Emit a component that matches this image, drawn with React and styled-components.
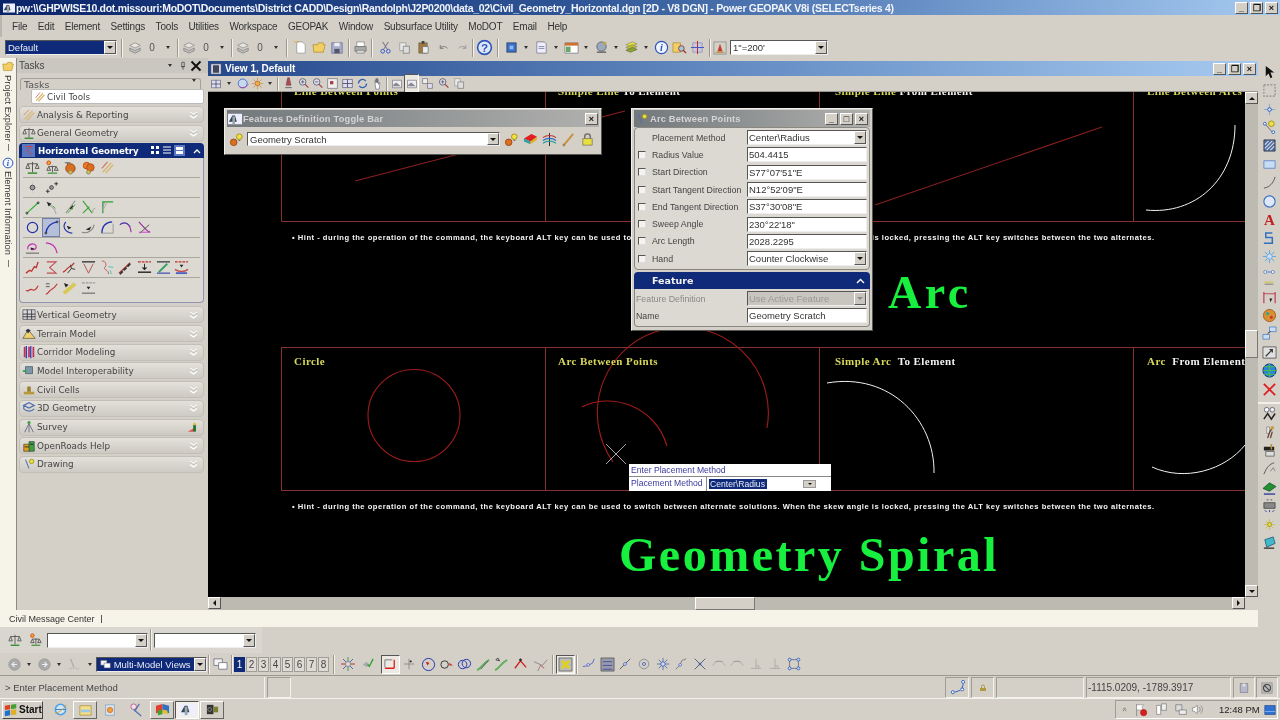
import React from 'react';
import styled, { createGlobalStyle } from 'styled-components';

const GlobalStyle = createGlobalStyle`
html, body { margin: 0; padding: 0; background: #d4d0c8; }
body { font-family: "Liberation Sans", Arial, sans-serif; font-size: 10px; color: #222; }
* { box-sizing: border-box; }
`;

const L = (d, c = '#444', w = 1) => <path d={d} stroke={c} strokeWidth={w} fill="none" />;
const F = (d, c, s = 'none') => <path d={d} fill={c} stroke={s} strokeWidth={0.7} />;
const Ci = (x, y, r, c, f = 'none', w = 1) => <circle cx={x} cy={y} r={r} stroke={c} fill={f} strokeWidth={w} />;

const ICONS = {
  stack: <>{F('M2 5l6-3 6 3-6 3z', '#e8e6e0', '#777')}{F('M2 8l6 3 6-3v3l-6 3-6-3z', '#bbb', '#777')}</>,
  newdoc: <>{F('M4 2h6l3 3v9H4z', '#fff', '#888')}{L('M3 3l-2-2M5 1v2', '#e0a020')}</>,
  folder: <>{F('M1 5h5l1-2h5v2h2l-2 8H2z', '#f2cf62', '#a88428')}</>,
  save: <>{F('M2 2h12v12H2z', '#a8aecd', '#55608a')}{F('M5 2h6v4H5z', '#eee')}{F('M5 9h6v5H5z', '#556')}</>,
  print: <>{F('M4 2h8v5H4z', '#fff', '#777')}{F('M2 7h12v5H2z', '#aaa', '#666')}{F('M4 11h8v3H4z', '#ddd', '#777')}</>,
  cut: <>{L('M5 2l5 8M11 2l-5 8', '#667')}{Ci(5, 12, 2, '#3355cc')}{Ci(11, 12, 2, '#3355cc')}</>,
  copy: <>{F('M2 2h7v9H2z', '#e8e8e8', '#888')}{F('M6 6h7v8H6z', '#ddd', '#666')}</>,
  paste: <>{F('M3 3h9v11H3z', '#a07840', '#664')}{F('M6 1h3v3H6z', '#444')}{F('M7 7h6v7H7z', '#eee', '#666')}</>,
  undo: <>{L('M4 5v4h4M4 9c2-3 6-3 9 0', '#777', 1.2)}</>,
  redo: <>{L('M12 5v4H8M12 9c-2-3-6-3-9 0', '#999', 1.2)}</>,
  help: <>{Ci(8, 8, 6.5, '#2b55b8', '#dfe8fa', 1.5)}<text x="8" y="12" textAnchor="middle" fontSize="11" fontWeight="700" fill="#2b55b8" fontFamily="Liberation Sans">?</text></>,
  cube: <>{F('M3 3h10v10H3z', '#3a70c8', '#234')}{F('M6 6h4v4H6z', '#8fb8f0')}</>,
  page: <>{F('M3 2h8l2 2v10H3z', '#eef', '#667')}{L('M5 7h6M5 9h6', '#88a')}</>,
  table: <>{F('M1 3h14v11H1z', '#fff', '#667')}{F('M1 3h14v3H1z', '#d07030')}{F('M2 7h5v6H2z', '#68a868')}</>,
  globe: <>{Ci(8, 7, 5, '#667', '#9ab')}{L('M3 13h10', '#666', 1.5)}{F('M10 2h3v3h-3z', '#c8a040')}</>,
  layers: <>{F('M2 5l7-3 5 2-7 3z', '#e8e040', '#886')}{F('M2 8l7-3 5 2-7 3z', '#b8c030', '#886')}{F('M2 11l7-3 5 2-7 3z', '#8aa828', '#664')}</>,
  info: <>{Ci(8, 8, 6.5, '#2b55b8', '#f0f4ff', 1.3)}<text x="8" y="12" textAnchor="middle" fontSize="11" fontStyle="italic" fontWeight="700" fill="#2b55b8" fontFamily="Liberation Serif">i</text></>,
  findfile: <>{F('M1 3h8v10H1z', '#f2cf62', '#a88428')}{Ci(10, 9, 3, '#a03030', '#9cd')}{L('M12 11l3 3', '#a03030', 1.5)}</>,
  crosshair: <>{F('M3 3h10v10H3z', '#c8c8e0', '#88a')}{L('M8 1v14', '#c02020')}{L('M1 8h14', '#4050c0')}</>,
  scalebox: <>{F('M1 1h14v14H1z', '#d4d0c8', '#777')}{F('M8 3l3 9H5z', '#c04030')}{L('M3 13h10', '#b08820')}</>,
  zoomin: <>{Ci(7, 6, 4, '#556', '#dde')}{L('M10 9l4 4', '#a04040', 1.5)}{L('M5 6h4M7 4v4', '#556')}</>,
  zoomout: <>{Ci(7, 6, 4, '#556', '#dde')}{L('M10 9l4 4', '#a04040', 1.5)}{L('M5 6h4', '#556')}</>,
  fit: <>{F('M2 2h12v12H2z', '#eee', '#556')}{F('M5 5h4v4H5z', '#a04040')}</>,
  grid: <>{F('M2 3h12v10H2z', '#dde', '#446')}{L('M8 3v10M2 8h12', '#446')}</>,
  rotate: <>{L('M3 8a5 5 0 0 1 9-3M13 8a5 5 0 0 1-9 3', '#3060b0', 1.6)}</>,
  hand: <>{F('M5 8V4h1v3-5h1v5-5h1v5-4h1v6l1-2h1l-1 8H6z', '#fff', '#556')}</>,
  view: <>{F('M2 3h12v10H2z', '#eee', '#556')}{F('M3 9l4-3 6 5H3z', '#889')}</>,
  tiles: <>{F('M2 2h6v6H2z', '#eee', '#556')}{F('M8 8h6v6H8z', '#dde', '#556')}</>,
  marker: <>{F('M7 1h2l2 9H5z', '#b04a50', '#644')}{L('M4 13h8', '#777', 1.5)}</>,
  sun: <>{Ci(8, 8, 3, '#c06030', '#e8b040')}{L('M8 1v3M8 12v3M1 8h3M12 8h3M3 3l2 2M11 11l2 2M13 3l-2 2M3 13l2-2', '#d09030')}</>,
  brain: <>{Ci(7, 8, 5.5, '#3060c0', '#c8d8f0')}{L('M3 12c4 2 8 1 11-3', '#a040a0')}</>,
  scale: <>{L('M8 2v11M3 4h10M3 4l-2 5h4zM13 4l-2 5h4z', '#555')}{L('M3 14h10', '#2a8a2a', 1.5)}</>,
  scalesun: <>{L('M9 6v7M5 7h8M5 7l-2 4h4zM13 7l-2 4h4z', '#555')}{L('M4 14h10', '#2a8a2a', 1.2)}{Ci(5, 3, 2, '#d04020', '#f0b020')}</>,
  palbulb: <>{L('M3 3h6M6 3v4', '#555')}{Ci(9, 9, 5, '#a04810', '#d87020')}{Ci(9, 13, 2, '#886', '#ddc040')}</>,
  palette: <>{Ci(6, 6, 3.5, '#c04810', '#e88030')}{Ci(10, 8, 4, '#c04810', '#d87020')}{Ci(8, 13, 2, '#886', '#ddc040')}</>,
  clip: <>{L('M3 13L12 3M6 14l8-9', '#d8b878', 1.6)}{L('M2 9l6-7', '#d07060', 1.2)}</>,
  pointAim: <>{L('M8 2v12M2 8h12', '#ccc')}{Ci(8, 8, 2.5, '#444', '#999')}</>,
  points: <>{Ci(8, 8, 2, '#444', '#999')}{L('M13 2v4M11 4h4M2 12h4M4 10v4', '#333')}</>,
  lineG: <>{L('M2 14L14 3', '#30b030', 1.3)}{Ci(2, 14, 1, '#333')}{Ci(14, 3, 1, '#333')}</>,
  lineArrow: <>{L('M3 2l8 8 2 5', '#aaa', 1.2)}{F('M3 2l5 2-3 3z', '#222')}{L('M9 6l3 3', '#30a030')}</>,
  lineSlash: <>{L('M4 14L14 1', '#999', 1.2)}{F('M8 9l4-4-1 5z', '#222')}{L('M6 14L14 5', '#30b030')}</>,
  lineCross: <>{L('M2 1l10 13M2 14l7-7', '#30a030', 1.1)}{L('M15 9c-2 0-3 2-2 4', '#999')}</>,
  lineCorner: <>{L('M3 14V2h11', '#30a030', 1.3)}{L('M5 2l-2 6', '#999')}{L('M8 2l-5 9', '#aaa')}</>,
  circle: <>{Ci(8, 8, 5.5, '#2030b0', 'none', 1.3)}</>,
  arcB: <>{L('M2 14C3 7 8 3 14 2', '#2030b0', 1.4)}{Ci(2, 14, 1, '#333')}{Ci(14, 2, 1, '#333')}</>,
  arcT: <>{L('M4 2C0 7 3 13 11 14', '#2030b0', 1.2)}{F('M5 6l5 2-3 2z', '#222')}</>,
  arcR: <>{L('M1 13c6 2 12-2 13-8', '#888', 1.1)}{F('M5 10l6-3-2 4z', '#222')}</>,
  arcQ: <>{L('M2 14C2 6 7 2 13 2', '#2030b0', 1.5)}{L('M2 14h12V4', '#999')}</>,
  arcP: <>{L('M2 5c4-4 11-2 12 8', '#a030a0', 1.2)}{L('M2 5c5-3 9-2 11 2', '#3040b0')}</>,
  arcX: <>{L('M2 2c4 4 8 10 12 11', '#a030a0', 1.3)}{L('M3 14L13 5', '#555')}{L('M2 13h12', '#c040c0')}</>,
  spiralIn: <>{L('M3 10C2 4 11 2 12 7c0 4-5 4-6 2', '#c030b0', 1.2)}{L('M1 14h14', '#555')}{F('M6 8l4 1-3 2z', '#222')}</>,
  arcM: <>{L('M2 3c6 0 11 4 12 11', '#c030b0', 1.3)}</>,
  zig1: <>{L('M1 14l4-3 2 1 3-5 2 1 2-6', '#c03030', 1.4)}</>,
  zig2: <>{L('M3 2h10L6 8l7 6H3', '#c05050', 1.1)}</>,
  zig3: <>{L('M1 13c3-1 4-4 6-5s4-2 6-5', '#c03030', 1.3)}{L('M6 14l4-5 4 1M10 9l-1-4', '#333')}</>,
  tri: <>{L('M1 2h14', '#222', 1.3)}{L('M3 4l5 10 5-10', '#b05050')}</>,
  zig4: <>{L('M2 1c5 0 5 5 3 7s5 3 4 7', '#c05050')}{L('M9 7l5 1M11 11l1 4', '#40c0c0')}</>,
  dashes: <>{L('M1 14L13 3', '#c03030', 1.3)}{L('M2 15l3-3M6 11l3-3M10 7l3-3', '#333', 2)}</>,
  drop: <><path d="M1 2h14" stroke="#c03030" strokeWidth="1.3" strokeDasharray="3 1" />{L('M8 4v6', '#222')}{F('M5 8h6l-3 3z', '#222')}{L('M1 13h14', '#222', 1.5)}</>,
  dropG: <>{L('M1 2h14', '#223', 1.2)}{L('M1 14h14', '#3040b0', 1.2)}{L('M3 13L12 4', '#30a060', 2)}</>,
  dropR: <><path d="M1 2h14" stroke="#c03030" strokeWidth="1.2" strokeDasharray="3 1" />{F('M6 5h4l-2 3z', '#222')}{L('M1 10c4 3 10 3 14 0', '#c05050', 1.4)}{L('M2 14h12', '#5060c0', 2)}</>,
  wave: <>{L('M1 10c3 2 4-2 6-1s4 2 7-4', '#c03030', 1.2)}</>,
  waveEq: <>{L('M2 14c3 0 3-4 6-5s4-3 6-6', '#c03030', 1.2)}{L('M2 3h4M2 6h4', '#555')}</>,
  ruler: <>{L('M2 13L14 3', '#d8c858', 4)}{F('M2 2l5 2-3 3z', '#222')}</>,
  dashDrop: <><path d="M1 2h14" stroke="#999" strokeWidth="1.2" strokeDasharray="3 1" />{F('M6 6h4l-2 3z', '#222')}{L('M1 13h14', '#777', 1.4)}</>,
  back: <>{Ci(8, 8, 7, '#999', '#aaa')}{L('M11 8H5M8 5L5 8l3 3', '#eee', 1.5)}</>,
  forward: <>{Ci(8, 8, 7, '#999', '#aaa')}{L('M5 8h6M8 5l3 3-3 3', '#eee', 1.5)}</>,
  pen: <>{L('M4 2l4 10', '#aaa', 1.4)}{L('M2 14c4-2 8-2 12 0', '#bbb', 1.2)}</>,
  monitors: <>{F('M1 2h9v7H1z', '#f4f4f4', '#556')}{F('M6 6h9v7H6z', '#fff', '#556')}</>,
  snapStar: <>{L('M8 1v14', '#40a050')}{L('M1 8h14', '#c03030')}{L('M3 3l10 10M13 3L3 13', '#6060c0')}{Ci(8, 8, 2.5, '#888', '#ddd')}</>,
  check: <>{F('M3 8l4 3 3-3-3-3z', '#aaa')}{L('M8 8l2 2 4-8', '#30a030', 1.4)}</>,
  snapAxes: <>{L('M2 12h10', '#e02020', 1.6)}{L('M12 12V3', '#e02020', 1.4)}{L('M2 3h8M2 3v8', '#777')}</>,
  plus: <>{L('M8 2v12M2 8h12', '#888')}{Ci(10, 5, 0.7, '#222', '#222')}</>,
  circPt: <>{Ci(8, 8, 6.5, '#2030b0')}{F('M5 5l4 1-2 3z', '#c02020')}</>,
  circMid: <>{Ci(6, 8, 4, '#333')}{F('M11 6l4 3h-4z', '#d03030')}</>,
  circs: <>{Ci(6, 8, 4.5, '#2030b0')}{Ci(10, 7, 4.5, '#2030b0')}</>,
  snakeG: <>{L('M1 14c4-1 6-7 13-11', '#60b060', 2)}{L('M5 13l8-9', '#555')}</>,
  triG: <>{L('M1 14c4-1 6-7 13-11', '#60b060', 2)}{L('M2 3l2-2 2 3z', '#444')}</>,
  chev: <>{L('M2 12l6-8 6 7', '#d02020', 1.4)}{Ci(8, 3, 1, '#222', '#222')}</>,
  quad: <>{L('M1 5l9 4 5-6M8 9l-3 6', '#888')}{L('M8 9l4 3', '#c05050')}</>,
  snapX: <>{F('M1 1h14v14H1z', '#bbb', '#444')}{L('M4 4l8 8M12 4l-8 8', '#e0d020', 3)}</>,
  smallLine: <>{L('M1 11l5-1 6-3 2-5', '#5060c0')}{Ci(7, 9, 1.5, '#5060c0', '#fff')}</>,
  hatch: <>{F('M1 1h14v14H1z', '#9a9aa8', '#444')}{L('M3 5h10M3 9h10M3 13h10', '#4050a0')}</>,
  midline: <>{L('M2 14L14 2', '#555')}{Ci(8, 8, 1.6, '#5060c0', '#fff')}</>,
  target: <>{Ci(8, 8, 5.5, '#889')}{Ci(8, 8, 1.8, '#5060c0')}</>,
  burst: <>{L('M8 1v14M1 8h14M3 3l10 10M13 3L3 13', '#5070a0')}{Ci(8, 8, 2.5, '#5060c0', '#cde')}</>,
  bend: <>{L('M2 14l5-5 2-5 5-2', '#777')}{Ci(7, 9, 1.5, '#5060c0', '#fff')}</>,
  xMark: <>{L('M2 2l12 12M14 2L2 14', '#556070', 1.1)}{Ci(8, 8, 1.2, '#5060c0')}</>,
  hump: <>{L('M1 10c3-7 11-7 14 0', '#aaa')}{L('M4 5h8', '#999')}</>,
  foot: <>{L('M8 2v11M2 13h12M11 13v-3h-3', '#aaa')}</>,
  fence: <>{F('M3 3h10v10H3z', 'none', '#445')}{[[3, 3], [13, 3], [3, 13], [13, 13]].map(([x, y]) => <circle key={x * 20 + y} cx={x} cy={y} r="1.7" fill="#cde" stroke="#3060c0" />)}</>,
  ie: <>{Ci(8, 8, 5.5, '#50a0e0', '#cfe6f8', 1.6)}{L('M3 8h10', '#3080c8')}{L('M2 12C6 12 13 6 14 3', '#e0a030')}</>,
  explorer: <>{F('M2 4h12v10H2z', '#f4e08a', '#a88428')}{F('M3 8h10v3H3z', '#9cc8e8')}</>,
  media: <>{F('M3 2h10v12H3z', '#d8e4f0', '#7090b0')}{Ci(8, 8, 3, '#e07020', '#f0a040')}</>,
  tool: <>{Ci(5, 5, 3, '#c06090', '#f0e0e8')}{L('M5 8l8 7M11 2L6 10', '#5070b0', 1.3)}</>,
  flag: <>{F('M1 4l7-2v8l-7 2z', '#e04030')}{F('M8 2l7 2v8l-7-2z', '#3070c0')}{F('M3 9l5-1v5l-5 1z', '#40a030')}{F('M8 8l5 1 1 4-6-1z', '#e0c030')}</>,
  thumb: <>{F('M0 2h16v12H0z', '#eef')}{F('M1 11l4-7 3 0 2 7z', '#345')}{F('M5 5h3v9H5z', '#9aa')}</>,
  camera: <>{F('M2 3h7v10H2z', '#333')}{F('M9 5h5v6H9z', '#7a8030')}{Ci(5, 8, 2, '#888')}</>,
  winflag: <>{F('M1 3l6-1v5l-6 1z', '#e04020')}{F('M8 2l6-1v5l-6 1z', '#40a030')}{F('M1 9l6-1v6l-6 1z', '#2070d0')}{F('M8 8l6-1v6l-6 1z', '#e0b020')}</>,
  lock: <>{L('M5 7V5a3 3 0 0 1 6 0v2', '#666', 1.4)}{F('M3 7h10v7H3z', '#e8e040', '#665')}</>,
  lockSmall: <>{L('M6 8V6a2 2 0 0 1 4 0v2', '#a08a30')}{F('M4 8h8v4H4z', '#b09a40')}</>,
  cake: <>{F('M1 7l8-5 6 3-7 5z', '#e02020')}{F('M1 7l7 3v3l-7-3z', '#30a0a0')}{F('M8 10l7-5v3l-7 5z', '#e0b020')}</>,
  section: <>{L('M8 1v14', '#222')}{L('M1 6c4-3 10-3 14 0', '#c03030', 1.2)}{L('M1 9c4-3 10-3 14 0', '#3070c0', 1.2)}{L('M1 12c4-3 10-3 14 0', '#30a0a0', 1.2)}</>,
  pencil: <>{L('M3 14L13 2', '#c89040', 2)}{Ci(3, 14, 1, '#a07030')}</>,
  bulbPal: <>{Ci(5, 11, 3.5, '#a04810', '#d87020')}{Ci(11, 5, 3, '#a09020', '#f0e040')}{L('M10 9h2', '#666')}</>,
  analysis: <>{L('M3 13L12 3M6 14l8-9', '#d8b878', 1.5)}{L('M2 8l6-6', '#d09060', 1.1)}</>,
  gridV: <>{F('M1 2h14v11H1z', '#d8d8e0', '#333')}{L('M1 7h14M1 10h14M6 2v11M11 2v11', '#333')}</>,
  terrain: <>{F('M1 13L7 3l8 10z', '#f0d070', '#443')}{F('M4 4l3-2 3 2-3 3z', '#334')}</>,
  corridor: <>{L('M3 2v12M8 2v12M13 2v12', '#c03060', 2)}{L('M5 1v14M10 1v14', '#3040b0', 1.5)}</>,
  interop: <>{F('M4 3h8v8H4z', '#7a98a8', '#345')}{L('M1 8h4', '#30a040', 2)}</>,
  cells: <>{F('M2 10h12v3H2z', '#b89838')}{F('M6 4h4v6H6z', '#98802a')}</>,
  geo3d: <>{L('M2 5l6-3 6 3-6 3zM2 5v4c4 4 9 3 12 0', '#5070b0', 1.3)}</>,
  survey: <>{L('M8 4L3 14M8 4l5 10M8 4v10', '#668')}{Ci(8, 3, 1.5, '#50a050', '#50a050')}</>,
  surveyR: <>{F('M1 14l9-5v5z', '#e05050')}{F('M9 4h4v10H9z', '#207030')}{Ci(11, 3, 1.5, '#e0c030', '#e0c030')}</>,
  orHelp: <>{F('M2 6h7v8H2z', '#e0a020', '#333')}{F('M8 3h6v11H8z', '#40a040', '#333')}{L('M3 9h5M9 6h4', '#222')}</>,
  drawing: <>{L('M4 3l4 10', '#5070b0', 1.2)}{Ci(11, 5, 2.5, '#a09020', '#e8e040')}</>,
  arrow: <>{F('M4 1l0 11 3-3 2 5 2-1-2-5h4z', '#111')}</>,
  selectBox: <><path d="M2 2h12v12H2z" fill="none" stroke="#8a8a8a" strokeWidth="1.2" strokeDasharray="2 1.5" /></>,
  place: <>{L('M8 2v12M2 8h12', '#88a8d0')}{Ci(8, 8, 2, '#3060c0', '#cde')}</>,
  bulbLine: <>{L('M3 4l8 9', '#667')}{Ci(10, 4, 3, '#a09020', '#f0e040')}{Ci(3, 4, 1.5, '#3060c0', '#fff')}{Ci(12, 13, 1.5, '#3060c0', '#fff')}</>,
  hatchBox: <>{F('M2 2h12v12H2z', '#5070a0', '#223')}{L('M3 7l4-4M3 11l8-8M5 13l8-8M9 13l4-4', '#dde', 1.1)}</>,
  rect: <>{F('M2 4h12v8H2z', '#c8dcf4', '#4070c0')}</>,
  arcS: <>{L('M2 14c6-1 10-5 12-12', '#555')}</>,
  ellipse: <>{Ci(8, 8, 6, '#4070c0', '#dfe8f8', 1.2)}</>,
  letterA: <><text x="8" y="14" textAnchor="middle" fontSize="16" fontWeight="700" fill="#c02020" fontFamily="Liberation Serif">A</text></>,
  bracket: <>{L('M11 2H4v5h7v6H2', '#3070c0', 1.6)}</>,
  cell: <>{L('M8 1v14M1 8h14M3 3l10 10M13 3L3 13', '#60a8e0')}{Ci(8, 8, 3, '#60a8e0', '#cde')}</>,
  dots: <>{Ci(3, 8, 2, '#4070c0', '#fff')}{L('M5 8h6', '#4070c0')}{Ci(13, 8, 2, '#4070c0', '#fff')}</>,
  measure: <>{L('M1 7h14', '#d0c870', 3)}{L('M1 10h14', '#555')}</>,
  dimens: <>{L('M2 2v12M14 2v12', '#c04050', 1.3)}{L('M2 4h12', '#c04050')}{F('M8 9h3l-2 4z', '#222')}</>,
  paintp: <>{Ci(8, 8, 6.5, '#a06020', '#d89030')}{Ci(6, 6, 1.2, '#30a0a0', '#30a0a0')}{Ci(10, 10, 1.2, '#d03030', '#d03030')}</>,
  boxes: <>{F('M8 1h7v5H8z', '#cde', '#3070c0')}{F('M1 9h7v5H1z', '#cde', '#3070c0')}{L('M6 8l3-2', '#222')}</>,
  resize: <>{F('M1 2h14v12H1z', '#e0e0e0', '#333')}{L('M4 12l7-7M8 5h3v3', '#333', 1.3)}</>,
  globe2: <>{Ci(8, 8, 7, '#103080', '#3080e0')}{L('M1 8h14M8 1v14M2 4h12M2 12h12', '#40c040', 1.3)}</>,
  redX: <>{L('M2 2l12 12M14 2L2 14', '#e02020', 2)}</>,
  people: <>{Ci(5, 4, 2.5, '#667', '#fff')}{Ci(11, 4, 2.5, '#667', '#eee')}{L('M2 14l4-6 4 6 4-6', '#222', 1.6)}</>,
  bug: <>{F('M5 2h3v7H5z', '#e8e8e8', '#777')}{L('M11 3l-3 5-2 6M11 7l-2 7', '#643', 1.4)}{Ci(11, 3, 1.5, '#c8a040', '#c8a040')}</>,
  brush: <>{F('M2 4h11v4H2z', '#222')}{F('M4 9h9v5H4z', '#ddd', '#444')}{L('M10 1v6', '#c09030', 1.6)}</>,
  pathPt: <>{L('M2 14c3-7 6-11 11-12', '#555')}{L('M9 11l3-4 2 4', '#888')}</>,
  greenBox: <>{F('M1 9l7-6 7 4-7 5z', '#209030', '#143')}{L('M2 15h12', '#3040a0', 1.5)}</>,
  printer2: <>{F('M2 5h12v6H2z', '#888', '#333')}{L('M3 13l2 2M8 13v2M13 13l-2 2', '#3040a0')}{L('M5 2h2M9 2h2', '#555')}</>,
  sparkle: <>{L('M8 2v12M2 8h12M4 4l8 8M12 4l-8 8', '#c8c050')}{Ci(8, 8, 2, '#a09020', '#f0e040')}</>,
  tablet: <>{F('M3 5l9-3 2 7-9 4z', '#40b8c8', '#146')}{L('M2 14h11', '#222', 1.3)}</>,
  upTray: <>{L('M5 8l3-3 3 3M5 11l3-3 3 3', '#444')}</>,
  trayFlag: <>{L('M3 1v14', '#888')}{F('M3 2h8l-2 3 2 3H3z', '#fff', '#888')}{Ci(11, 11, 3.5, '#c02020', '#d02020')}</>,
  trayDoc: <>{F('M2 3h5v11H2z', '#fff', '#666')}{F('M8 1h6v8H8z', '#eee', '#666')}</>,
  trayNet: <>{F('M2 2h7v7H2z', '#ddd', '#666')}{F('M6 8h8v5H6z', '#eee', '#666')}</>,
  traySnd: <>{F('M5 6l4-3v10l-4-3H3V6z', '#fff', '#666')}{L('M11 5c2 2 2 4 0 6M13 3c3 3 3 7 0 10', '#888')}</>,
  trayNote: <>{F('M1 2h14v12H1z', '#3070d0', '#137')}{L('M1 10h14', '#90c0f0')}</>,
  nosign: <>{F('M2 2h12v12H2z', '#bbb', '#888')}{Ci(8, 8, 4, '#444', 'none', 1.2)}{L('M5 5l6 6', '#444', 1.2)}</>,
  saveSmall: <>{F('M3 2h10v12H3z', '#b8b8cc', '#667')}{F('M6 2h4v4H6z', '#ddd')}</>,
  snapPath: <>{Ci(14, 2, 1.6, '#3060c0', '#fff')}{Ci(13, 10, 1.6, '#3060c0', '#fff')}{Ci(3, 13, 1.6, '#3060c0', '#fff')}{L('M14 4l-1 5M11 11l-6 2', '#3060c0')}</>,
  viewDoc: <>{F('M1 1h14v14H1z', '#cdd5e8', '#223')}{F('M4 3h8v10H4z', '#445')}</>,
  civil: <>{F('M0 0h16v16H0z', '#5a78c0')}{L('M4 3h8L6 8l6 5', '#d04040', 1.2)}</>,
  dockX: <>{L('M2 2l12 12M14 2L2 14', '#111', 2.6)}</>,
  pin: <>{L('M6 2h4v7H6zM5 9h6M8 9v5', '#444', 1.2)}</>,
};

const IconSvg = styled.svg`
  flex: none;
  display: block;
`;

const Icon = ({ n, s = 16 }) => (
  <IconSvg width={s} height={s} viewBox="0 0 16 16" fill="none">{ICONS[n]}</IconSvg>
);

const Page = styled.div`
  width: 1280px;
  height: 720px;
  overflow: hidden;
  display: flex;
  flex-direction: column;
  background: #d4d0c8;
  filter: blur(0.3px);
`;

const TitleBar = styled.div`
  height: 15px;
  display: flex;
  align-items: center;
  padding-left: 3px;
  gap: 1px;
  background: linear-gradient(90deg, #0a246a 0%, #2e5596 45%, #6f97cc 75%, #a6caf0 100%);
`;

const TitleText = styled.div`
  flex: 1;
  color: #f2f4f8;
  font: bold 10.5px "Liberation Sans", sans-serif;
  letter-spacing: -0.3px;
  white-space: nowrap;
`;

const WinButtons = styled.div`
  display: flex;
  gap: 2px;
  padding-right: ${p => p.$pad || 2}px;
`;

const WinButton = styled.div`
  width: 13px;
  height: 12px;
  background: #d4d0c8;
  border: 1px solid;
  border-color: #fff #555 #555 #fff;
  color: #111;
  font: bold 9px/10px "Liberation Sans", sans-serif;
  text-align: center;
`;

const MenuBar = styled.div`
  height: 22px;
  display: flex;
  align-items: center;
  padding-left: 10px;
  gap: 10.5px;
  border-left: 2px solid #bab6ae;
  font: 10px "Liberation Sans", sans-serif;
  letter-spacing: -0.2px;
  color: #333;
`;

const MainToolbar = styled.div`
  height: 21px;
  display: flex;
  align-items: center;
  padding-left: 5px;
`;

const Combo = styled.div`
  width: ${p => p.$w}px;
  height: ${p => p.$h || 14}px;
  flex: none;
  display: flex;
  align-items: center;
  justify-content: space-between;
  padding-left: ${p => (p.$pad ?? 2)}px;
  background: ${p => (p.$navy ? '#0f2a78' : p.$off ? '#c8c5be' : '#fff')};
  color: ${p => (p.$navy ? '#e8ecf6' : p.$off ? '#999' : '#333')};
  border: 1px solid;
  border-color: #555 #eee #eee #555;
  font: 9.5px "Liberation Sans", sans-serif;
  white-space: nowrap;
  overflow: hidden;
`;

const DropButton = styled.div`
  width: 12px;
  height: 100%;
  flex: none;
  background: ${p => (p.$off ? '#c8c5be' : '#d4d0c8')};
  border: 1px solid;
  border-color: #fff #555 #555 #fff;
  display: flex;
  align-items: center;
  justify-content: center;
  &::after {
    content: '';
    border: 3px solid transparent;
    border-top: 3px solid ${p => (p.$off ? '#888' : '#111')};
    border-bottom: 0;
  }
`;

const Slot = styled.div`
  width: ${p => p.$w}px;
  flex: none;
  display: flex;
  align-items: center;
  justify-content: center;
  font: 10px "Liberation Sans", sans-serif;
  color: #555;
`;

const Caret = styled.div`
  width: ${p => p.$w || 14}px;
  flex: none;
  display: flex;
  justify-content: center;
  &::after {
    content: '';
    border: 2.5px solid transparent;
    border-top: 3px solid #333;
    border-bottom: 0;
  }
`;

const Sep = styled.div`
  width: 2px;
  height: ${p => p.$h || 18}px;
  margin: 0 ${p => p.$m ?? 3}px;
  flex: none;
  border-left: 1px solid #9c9890;
  border-right: 1px solid #f4f2ec;
`;

const Middle = styled.div`
  height: 552px;
  display: flex;
`;

const SideTabs = styled.div`
  width: 16px;
  flex: none;
  background: #f6f3e8;
  display: flex;
  flex-direction: column;
  align-items: center;
  padding-top: 2px;
`;

const SideText = styled.div`
  writing-mode: vertical-rl;
  font: 9.4px "Liberation Sans", sans-serif;
  color: #333;
  height: ${p => p.$h}px;
  margin-top: 2px;
  white-space: nowrap;
`;

const SideBar = styled.div`
  width: 1px;
  height: 7px;
  margin: 3px 0 6px;
  background: #777;
`;

const Dock = styled.div`
  width: 192px;
  flex: none;
  display: flex;
  flex-direction: column;
  border-left: 1px solid #8e8b84;
  padding-right: 3px;
`;

const DockHeader = styled.div`
  height: 15px;
  flex: none;
  display: flex;
  align-items: center;
  padding: 0 5px 0 2px;
  font: 10px "Liberation Sans", sans-serif;
  color: #444;
  background: #cac7c0;
  margin-right: -3px;
`;

const DockTitle = styled.div`
  flex: 1;
`;

const TaskPane = styled.div`
  padding: 4px 1px 0 2px;
  display: flex;
  flex-direction: column;
`;

const TaskTab = styled.div`
  height: 12px;
  margin: 1px 3px 0 1px;
  padding-left: 3px;
  display: flex;
  justify-content: space-between;
  border: 1px solid #a5a29b;
  border-bottom: 0;
  border-radius: 3px 3px 0 0;
  font: 9.5px/11px "DejaVu Sans", sans-serif;
  color: #555;
`;

const TaskCurrent = styled.div`
  height: 15px;
  margin: -1px 0 2px 12px;
  padding-left: 2px;
  display: flex;
  align-items: center;
  gap: 1px;
  background: #fff;
  border: 1px solid #bbb;
  border-radius: 2px;
  font: 8.8px "DejaVu Sans", sans-serif;
  color: #444;
`;

const Pill = styled.div`
  height: 17px;
  margin-bottom: 1.7px;
  padding: 0 5px 0 2px;
  display: flex;
  align-items: center;
  gap: 1px;
  border: 1px solid #c2bfb8;
  border-radius: 4px;
  background: linear-gradient(#e4e1db, #cdcac3);
  font: 8.8px "DejaVu Sans", sans-serif;
  color: #444;
`;

const PillLabel = styled.div`
  flex: 1;
  white-space: nowrap;
`;

const Chevrons = () => (
  <svg width="9" height="8" viewBox="0 0 9 8" fill="none">
    <path d="M1 1l3.5 2.5L8 1M1 4.5L4.5 7 8 4.5" stroke="#fff" strokeWidth="1.2" />
    <path d="M1 2l3.5 2.5L8 2" stroke="#a8a59e" strokeWidth="0.6" />
  </svg>
);

const GeoHeader = styled.div`
  height: 15px;
  padding: 0 3px 0 3px;
  display: flex;
  align-items: center;
  gap: 3px;
  background: #0f2a78;
  border-radius: 4px 4px 0 0;
  color: #fff;
  font: bold 8.6px "DejaVu Sans", sans-serif;
`;

const GeoBody = styled.div`
  height: 145px;
  margin-bottom: 3px;
  padding: 0 3px;
  border: 1px solid #8f95b0;
  border-top: 0;
  border-radius: 0 0 4px 4px;
  background: #dcd9d2;
`;

const GeoRow = styled.div`
  height: 20px;
  display: flex;
  align-items: center;
  border-bottom: ${p => (p.$last ? 0 : '1px solid #aaa79f')};
`;

const GeoTool = styled.div`
  width: 18.7px;
  height: 19px;
  flex: none;
  display: flex;
  align-items: center;
  justify-content: center;
  background: ${p => (p.$on ? '#b5bfd8' : 'transparent')};
  outline: ${p => (p.$on ? '1px solid #6f7fa8' : 'none')};
  outline-offset: -1px;
`;

const ViewWindow = styled.div`
  flex: 1;
  min-width: 0;
  padding-top: 3px;
  display: flex;
  flex-direction: column;
`;

const ViewTitle = styled.div`
  height: 15px;
  flex: none;
  display: flex;
  align-items: center;
  gap: 3px;
  padding-left: 2px;
  background: linear-gradient(90deg, #25488c 0%, #6b92c8 55%, #a6caf0 100%);
  color: #fff;
  font: bold 10px "Liberation Sans", sans-serif;
`;

const ViewName = styled.div`
  flex: 1;
`;

const ViewTools = styled.div`
  height: 16px;
  flex: none;
  display: flex;
  align-items: center;
  border-bottom: 1px solid #9c9890;
`;

const ViewBody = styled.div`
  flex: 1;
  min-height: 0;
  display: flex;
`;

const Canvas = styled.div`
  position: relative;
  width: 1037px;
  height: 505px;
  flex: none;
  overflow: hidden;
  background: #000;
`;

const Drawing = styled.svg`
  position: absolute;
  left: 0;
  top: 0;
`;

const Heading = styled.div`
  position: absolute;
  left: ${p => p.$x}px;
  top: ${p => p.$y}px;
  color: #d8d85a;
  font: bold 11px "Liberation Serif", serif;
  letter-spacing: 0.04em;
  white-space: pre;
  & span { color: #f2f2f2; }
`;

const Hint = styled.div`
  position: absolute;
  left: 84px;
  top: ${p => p.$y}px;
  color: #f4f4f4;
  font: bold 7.6px "Liberation Sans", sans-serif;
  letter-spacing: 0.51px;
  white-space: pre;
`;

const BigTitle = styled.div`
  position: absolute;
  left: ${p => p.$x}px;
  top: ${p => p.$y}px;
  color: #18f040;
  font: bold ${p => p.$size}px "Liberation Serif", serif;
  letter-spacing: ${p => p.$sp}px;
  white-space: pre;
`;

const Floating = styled.div`
  position: absolute;
  left: ${p => p.$x}px;
  top: ${p => p.$y}px;
  width: ${p => p.$w}px;
  height: ${p => p.$h}px;
  display: flex;
  flex-direction: column;
  padding: 1px 2px;
  background: #d4d0c8;
  border: 1px solid;
  border-color: #eee #555 #555 #eee;
`;

const FloatTitle = styled.div`
  height: 17px;
  flex: none;
  display: flex;
  align-items: center;
  gap: 1px;
  padding: 0 1px;
  background: linear-gradient(90deg, #72787c, #b0b0ae);
  color: #d4d4d4;
  font: bold 9.3px "Liberation Sans", sans-serif;
`;

const FloatName = styled.div`
  flex: 1;
  white-space: nowrap;
  letter-spacing: 0.02em;
`;

const ToggleRow = styled.div`
  flex: 1;
  display: flex;
  align-items: center;
  padding: 0 0 2px 2px;
  gap: 3px;
`;

const Panel = styled.div`
  height: 143px;
  padding: 1px 3px 1px 1px;
  border: 1px solid #8a8780;
  border-radius: 4px;
  background: #dcd9d2;
`;

const FieldRow = styled.div`
  height: 17.3px;
  display: flex;
  align-items: center;
  font: 8.8px "Liberation Sans", sans-serif;
  color: #444;
`;

const Check = styled.div`
  width: 8px;
  height: 8px;
  margin: 0 6px 0 2px;
  flex: none;
  background: #f4f3f0;
  border: 1px solid;
  border-color: #555 #ddd #ddd #555;
`;

const Blank = styled.div`
  width: 16px;
  flex: none;
`;

const FieldLabel = styled.div`
  width: ${p => p.$w || 95}px;
  flex: none;
  color: ${p => (p.$off ? '#888' : '#444')};
  white-space: nowrap;
`;

const FeatureHead = styled.div`
  height: 17px;
  margin-top: 2px;
  padding: 0 5px 0 18px;
  display: flex;
  justify-content: space-between;
  align-items: center;
  background: #0f2a78;
  border-radius: 4px 4px 0 0;
  color: #f2f2f2;
  font: bold 9.5px "DejaVu Sans", sans-serif;
`;

const FeatureBody = styled.div`
  height: 38px;
  padding: 1px 3px 1px 1px;
  border: 1px solid #8a8780;
  border-top: 0;
  border-radius: 0 0 4px 4px;
  background: #dcd9d2;
`;

const Prompt = styled.div`
  position: absolute;
  left: 421px;
  top: 372px;
  width: 202px;
  height: 27px;
  background: #fff;
  color: #3a3a9c;
  font: 8.6px "Liberation Sans", sans-serif;
  white-space: nowrap;
`;

const PromptTitle = styled.div`
  height: 13px;
  line-height: 12px;
  padding-left: 2px;
  border-bottom: 1px solid #888;
`;

const PromptRow = styled.div`
  height: 14px;
  display: flex;
  align-items: center;
`;

const PromptLabel = styled.div`
  width: 78px;
  padding-left: 2px;
  flex: none;
  border-right: 1px solid #888;
  height: 100%;
  line-height: 13px;
`;

const PromptValue = styled.div`
  margin-left: 2px;
  padding: 0 1px;
  background: #0f2a78;
  color: #e8ecf8;
  width: 58px;
  line-height: 10px;
  height: 10px;
`;

const PromptDrop = styled.div`
  width: 13px;
  height: 8px;
  margin-left: 36px;
  background: #d4d0c8;
  border: 1px solid #999;
  display: flex;
  justify-content: center;
  align-items: center;
  &::after {
    content: '';
    border: 2px solid transparent;
    border-top: 2px solid #111;
    border-bottom: 0;
  }
`;

const VScroll = styled.div`
  width: 13px;
  flex: none;
  height: 505px;
  display: flex;
  flex-direction: column;
  background: #bdbab2;
`;

const ScrollBtn = styled.div`
  width: 13px;
  height: 12px;
  flex: none;
  background: #d4d0c8;
  border: 1px solid;
  border-color: #fff #555 #555 #fff;
  display: flex;
  align-items: center;
  justify-content: center;
  &::after {
    content: '';
    border: 3px solid transparent;
    ${p => p.$dir === 'up' && 'border-bottom: 3px solid #111; border-top: 0;'}
    ${p => p.$dir === 'down' && 'border-top: 3px solid #111; border-bottom: 0;'}
    ${p => p.$dir === 'left' && 'border-right: 3px solid #111; border-left: 0;'}
    ${p => p.$dir === 'right' && 'border-left: 3px solid #111; border-right: 0;'}
  }
`;

const VThumb = styled.div`
  height: 28px;
  margin-top: 226px;
  flex: none;
  background: #d4d0c8;
  border: 1px solid;
  border-color: #fff #777 #777 #fff;
`;

const Spacer = styled.div`
  flex: 1;
`;

const HScroll = styled.div`
  height: 13px;
  flex: none;
  display: flex;
  background: #bdbab2;
`;

const HThumb = styled.div`
  width: 60px;
  margin-left: 474px;
  flex: none;
  background: #d4d0c8;
  border: 1px solid;
  border-color: #fff #777 #777 #fff;
`;

const ScrollCorner = styled.div`
  width: 13px;
  flex: none;
  background: #d4d0c8;
`;

const RightTools = styled.div`
  width: 22px;
  flex: none;
  padding-top: 5px;
  display: flex;
  flex-direction: column;
  align-items: center;
`;

const RightTool = styled.div`
  height: ${p => p.$h || 18.45}px;
  flex: none;
  display: flex;
  align-items: center;
  justify-content: center;
`;

const RightSep = styled.div`
  width: 22px;
  height: 2px;
  margin: 4px 0 0;
  background: #f2f0ea;
`;

const MessageBar = styled.div`
  height: 17px;
  width: 1258px;
  display: flex;
  align-items: center;
  padding-left: 9px;
  gap: 6px;
  background: #f6f3e8;
  font: 9px "Liberation Sans", sans-serif;
  color: #333;
`;

const MessageMark = styled.div`
  width: 1px;
  height: 8px;
  background: #555;
`;

const FilterBar = styled.div`
  height: 26px;
  width: 262px;
  display: flex;
  align-items: center;
  padding-left: 5px;
  background: #d9d6cf;
`;

const ViewBar = styled.div`
  height: 23px;
  display: flex;
  align-items: center;
  padding-left: 5px;
  border-bottom: 1px solid #9c9890;
`;

const NumKey = styled.div`
  width: 11px;
  height: 15px;
  margin-right: 1px;
  flex: none;
  display: flex;
  align-items: center;
  justify-content: center;
  background: ${p => (p.$on ? '#0f2a78' : '#dedbd4')};
  color: ${p => (p.$on ? '#fff' : '#444')};
  border: 1px solid ${p => (p.$on ? '#0f2a78' : '#a09d96')};
  font: 10px "Liberation Sans", sans-serif;
`;

const ToggleTool = styled.div`
  width: ${p => p.$w || 18}px;
  height: 19px;
  flex: none;
  display: flex;
  align-items: center;
  justify-content: center;
  background: ${p => (p.$on ? '#ece9e2' : 'transparent')};
  border: ${p => (p.$on ? '1px solid' : '0')};
  border-color: #555 #fff #fff #555;
`;

const StatusBar = styled.div`
  height: 23px;
  display: flex;
  align-items: stretch;
  padding: 1px 2px 0 0;
  border-bottom: 1px solid #f4f2ec;
  font: 9.5px "Liberation Sans", sans-serif;
  color: #444;
`;

const StatusPrompt = styled.div`
  width: 265px;
  flex: none;
  padding-left: 5px;
  display: flex;
  align-items: center;
  border-right: 1px solid #f4f2ec;
`;

const StatusCell = styled.div`
  width: ${p => p.$w}px;
  margin-left: ${p => p.$m || 2}px;
  padding-left: ${p => p.$pad || 0}px;
  flex: none;
  display: flex;
  align-items: center;
  justify-content: ${p => (p.$pad ? 'flex-start' : 'center')};
  border: 1px solid;
  border-color: #a09d96 #f4f2ec #f4f2ec #a09d96;
  font-size: ${p => (p.$big ? 10 : 9.5)}px;
`;

const TaskBar = styled.div`
  height: 21px;
  display: flex;
  align-items: center;
  padding-left: 2px;
`;

const StartButton = styled.div`
  width: 41px;
  height: 18px;
  flex: none;
  display: flex;
  align-items: center;
  gap: 1px;
  padding-left: 1px;
  background: #d4d0c8;
  border: 1px solid;
  border-color: #fff #444 #444 #fff;
  font: bold 10px "Liberation Sans", sans-serif;
  color: #111;
`;

const TaskApp = styled.div`
  width: ${p => p.$w || 24}px;
  height: 18px;
  margin-left: ${p => p.$m || 0}px;
  flex: none;
  display: flex;
  align-items: center;
  justify-content: center;
  background: ${p => (p.$on ? '#f2f0ec' : 'transparent')};
  border: ${p => (p.$flat ? '0' : '1px solid')};
  border-color: ${p => (p.$on ? '#555 #fff #fff #555' : '#fff #666 #666 #fff')};
`;

const Tray = styled.div`
  width: 163px;
  height: 19px;
  margin-left: auto;
  margin-right: 2px;
  flex: none;
  display: flex;
  align-items: center;
  padding-left: 3px;
  border: 1px solid;
  border-color: #a09d96 #fff #fff #a09d96;
  font: 9.5px "Liberation Sans", sans-serif;
  color: #222;
`;

const TrayIcon = styled.div`
  width: ${p => p.$w || 19}px;
  flex: none;
  display: flex;
  justify-content: center;
`;

const Clock = styled.div`
  width: 44px;
  flex: none;
  margin-left: 16px;
  white-space: nowrap;
`;

const MENUS = ['File', 'Edit', 'Element', 'Settings', 'Tools', 'Utilities', 'Workspace', 'GEOPAK', 'Window', 'Subsurface Utility', 'MoDOT', 'Email', 'Help'];

const GEO_ROWS = [
  ['scale', 'scalesun', 'palbulb', 'palette', 'clip'],
  ['pointAim', 'points'],
  ['lineG', 'lineArrow', 'lineSlash', 'lineCross', 'lineCorner'],
  ['circle', 'arcB', 'arcT', 'arcR', 'arcQ', 'arcP', 'arcX'],
  ['spiralIn', 'arcM'],
  ['zig1', 'zig2', 'zig3', 'tri', 'zig4', 'dashes', 'drop', 'dropG', 'dropR'],
  ['wave', 'waveEq', 'ruler', 'dashDrop'],
];

const SECTIONS_BELOW = [
  ['Vertical Geometry', 'gridV'],
  ['Terrain Model', 'terrain'],
  ['Corridor Modeling', 'corridor'],
  ['Model Interoperability', 'interop'],
  ['Civil Cells', 'cells'],
  ['3D Geometry', 'geo3d'],
  ['Survey', 'survey'],
  ['OpenRoads Help', 'orHelp'],
  ['Drawing', 'drawing'],
];

const RIGHT_TOOLS = ['arrow', 'selectBox', 'place', 'bulbLine', 'hatchBox', 'rect', 'arcS', 'ellipse', 'letterA', 'bracket', 'cell', 'dots', 'measure', 'dimens', 'paintp', 'boxes', 'resize', 'globe2', 'redX'];
const RIGHT_HEIGHTS = { dots: 12, measure: 10 };
const RIGHT_TOOLS_2 = ['people', 'bug', 'brush', 'pathPt', 'greenBox', 'printer2', 'sparkle', 'tablet'];

const FIELDS = [
  ['Radius Value', '504.4415'],
  ['Start Direction', 'S77°07\'51"E'],
  ['Start Tangent Direction', 'N12°52\'09"E'],
  ['End Tangent Direction', 'S37°30\'08"E'],
  ['Sweep Angle', '230°22\'18"'],
  ['Arc Length', '2028.2295'],
];

const VIEW_SNAPS = [['circPt', 20], ['circMid', 16], ['circs', 20], ['snakeG', 18], ['triG', 19], ['chev', 19], ['quad', 20]];
const SNAP_MODES = ['midline', 'target', 'burst', 'bend', 'xMark', 'hump', 'hump', 'foot', 'foot', 'fence'];

const HINT = '• Hint - during the operation of the command, the keyboard ALT key can be used to switch between alternate solutions. When the skew angle is locked, pressing the ALT key switches between the two alternates.';

const TABLE = '#86302f';

function CadDrawing() {
  return (
    <Drawing width="1037" height="505" viewBox="208 92 1037 505" fill="none">
      <g stroke={TABLE} strokeWidth="1">
        <path d="M281.5 92v129.5H1245M545.5 92v129M819.5 92v129M1133.5 92v129" />
        <path d="M281.5 347.5H1245M281.5 490.5H1245M281.5 347v144M545.5 347v144M819.5 347v118M1133.5 347v144" />
      </g>
      <g stroke="#a01c1c" strokeWidth="1.1">
        <path d="M355 181L625 111M875 205L1102 127" stroke="#8a2020" />
        <circle cx="414" cy="415.5" r="46" />
        <path d="M767 428A85.5 85.5 0 1 0 613 462" />
        <path d="M582 407C610 392 655 405 667 446" />
      </g>
      <g stroke="#f2f2f2" strokeWidth="1">
        <path d="M827 383C890 372 935 420 934 473" />
        <path d="M1152 467C1185 482 1225 470 1245 445" />
        <path d="M1146 210C1195 215 1235 180 1235 125" />
      </g>
      <path d="M606 444L626 464M626 444L606 464" stroke="#cfcfcf" strokeWidth="0.8" />
    </Drawing>
  );
}

function ArcDialog() {
  return (
    <Floating $x={423} $y={16} $w={242} $h={223}>
      <FloatTitle>
        <Icon n="drawing" s={14} />
        <FloatName>Arc Between Points</FloatName>
        <WinButtons $pad={1}>
          <WinButton>_</WinButton>
          <WinButton>□</WinButton>
          <WinButton>×</WinButton>
        </WinButtons>
      </FloatTitle>
      <Panel>
        <FieldRow>
          <Blank />
          <FieldLabel>Placement Method</FieldLabel>
          <Combo $w={120} $h={15} $pad={1}>Center\Radius<DropButton /></Combo>
        </FieldRow>
        {FIELDS.map(([label, value]) => (
          <FieldRow key={label}>
            <Check />
            <FieldLabel>{label}</FieldLabel>
            <Combo $w={120} $h={15} $pad={1}>{value}</Combo>
          </FieldRow>
        ))}
        <FieldRow>
          <Check />
          <FieldLabel>Hand</FieldLabel>
          <Combo $w={120} $h={15} $pad={1}>Counter Clockwise<DropButton /></Combo>
        </FieldRow>
      </Panel>
      <FeatureHead>Feature<svg width="9" height="6" viewBox="0 0 9 6" fill="none"><path d="M1 5l3.5-3.5L8 5" stroke="#fff" strokeWidth="1.4" /></svg></FeatureHead>
      <FeatureBody>
        <FieldRow>
          <FieldLabel $w={111} $off>Feature Definition</FieldLabel>
          <Combo $w={120} $h={15} $off $pad={1}>Use Active Feature<DropButton $off /></Combo>
        </FieldRow>
        <FieldRow>
          <FieldLabel $w={111}>Name</FieldLabel>
          <Combo $w={120} $h={15} $pad={1}>Geometry Scratch</Combo>
        </FieldRow>
      </FeatureBody>
    </Floating>
  );
}

function ToggleBar() {
  return (
    <Floating $x={16} $y={16} $w={378} $h={47}>
      <FloatTitle>
        <Icon n="thumb" s={14} />
        <FloatName>Features Definition Toggle Bar</FloatName>
        <WinButton>×</WinButton>
      </FloatTitle>
      <ToggleRow>
        <Icon n="bulbPal" s={15} />
        <Combo $w={253} $h={14}>Geometry Scratch<DropButton /></Combo>
        <Slot $w={16}><Icon n="bulbPal" s={15} /></Slot>
        <Slot $w={16}><Icon n="cake" s={15} /></Slot>
        <Slot $w={16}><Icon n="section" s={15} /></Slot>
        <Slot $w={16}><Icon n="pencil" s={15} /></Slot>
        <Slot $w={16}><Icon n="lock" s={15} /></Slot>
      </ToggleRow>
    </Floating>
  );
}

export default function App() {
  return (
    <Page>
      <GlobalStyle />
      <TitleBar>
        <Icon n="thumb" s={12} />
        <TitleText>pw:\\GHPWISE10.dot.missouri:MoDOT\Documents\District CADD\Design\Randolph\J2P0200\data_02\Civil_Geometry_Horizontal.dgn [2D - V8 DGN] - Power GEOPAK V8i (SELECTseries 4)</TitleText>
        <WinButtons>
          <WinButton>_</WinButton>
          <WinButton>❐</WinButton>
          <WinButton>×</WinButton>
        </WinButtons>
      </TitleBar>

      <MenuBar>
        {MENUS.map(m => <div key={m}>{m}</div>)}
      </MenuBar>

      <MainToolbar>
        <Combo $w={112} $navy $h={15}>Default<DropButton /></Combo>
        <Sep $m={4} />
        <Slot $w={16}><Icon n="stack" s={14} /></Slot>
        <Slot $w={18}>0</Slot>
        <Caret $w={14} />
        <Sep $m={2} />
        <Slot $w={16}><Icon n="stack" s={14} /></Slot>
        <Slot $w={18}>0</Slot>
        <Caret $w={14} />
        <Sep $m={2} />
        <Slot $w={16}><Icon n="stack" s={14} /></Slot>
        <Slot $w={18}>0</Slot>
        <Caret $w={14} />
        <Sep $m={3} />
        <Slot $w={19}><Icon n="newdoc" s={15} /></Slot>
        <Slot $w={18}><Icon n="folder" s={15} /></Slot>
        <Slot $w={18}><Icon n="save" s={14} /></Slot>
        <Sep $m={2} />
        <Slot $w={17}><Icon n="print" s={15} /></Slot>
        <Sep $m={2} />
        <Slot $w={20}><Icon n="cut" s={15} /></Slot>
        <Slot $w={19}><Icon n="copy" s={14} /></Slot>
        <Slot $w={19}><Icon n="paste" s={15} /></Slot>
        <Slot $w={20}><Icon n="undo" s={13} /></Slot>
        <Slot $w={18}><Icon n="redo" s={13} /></Slot>
        <Sep $m={1} />
        <Slot $w={19}><Icon n="help" s={17} /></Slot>
        <Sep $m={3} />
        <Slot $w={18}><Icon n="cube" s={15} /></Slot>
        <Caret $w={12} />
        <Slot $w={18}><Icon n="page" s={15} /></Slot>
        <Caret $w={12} />
        <Slot $w={18}><Icon n="table" s={15} /></Slot>
        <Caret $w={12} />
        <Slot $w={18}><Icon n="globe" s={15} /></Slot>
        <Caret $w={12} />
        <Slot $w={18}><Icon n="layers" s={15} /></Slot>
        <Caret $w={12} />
        <Slot $w={18}><Icon n="info" s={15} /></Slot>
        <Slot $w={18}><Icon n="findfile" s={15} /></Slot>
        <Slot $w={19}><Icon n="crosshair" s={15} /></Slot>
        <Sep $m={2} />
        <Slot $w={14}><Icon n="scalebox" s={14} /></Slot>
        <Slot $w={3} />
        <Combo $w={98} $h={15}>1"=200'<DropButton /></Combo>
      </MainToolbar>

      <Middle>
        <SideTabs>
          <Icon n="folder" s={13} />
          <SideText $h={66}>Project Explorer</SideText>
          <SideBar />
          <Icon n="info" s={12} />
          <SideText $h={86}>Element Information</SideText>
          <SideBar />
        </SideTabs>
        <Dock>
          <DockHeader>
            <DockTitle>Tasks</DockTitle>
            <Caret $w={12} />
            <Slot $w={13}><Icon n="pin" s={10} /></Slot>
            <Slot $w={14}><Icon n="dockX" s={12} /></Slot>
          </DockHeader>
          <TaskPane>
            <TaskTab>Tasks<Caret $w={12} /></TaskTab>
            <TaskCurrent><Icon n="clip" s={12} />Civil Tools</TaskCurrent>
            <Pill><Icon n="analysis" s={14} /><PillLabel>Analysis &amp; Reporting</PillLabel><Chevrons /></Pill>
            <Pill><Icon n="scale" s={14} /><PillLabel>General Geometry</PillLabel><Chevrons /></Pill>
            <GeoHeader>
              <Icon n="civil" s={13} />
              <PillLabel>Horizontal Geometry</PillLabel>
              <svg width="40" height="11" viewBox="0 0 40 11" fill="none">
                <path d="M1 1h3v3H1zM6 1h3v3H6zM1 6h3v3H1zM6 6h3v3H6z" fill="#fff" />
                <path d="M13 2h8M13 5h8M13 8h8" stroke="#fff" />
                <path d="M24 0h11v11H24z" fill="#5a78c0" />
                <path d="M26 2h7v3h-7zM26 6h7v3h-7z" fill="#fff" />
              </svg>
              <svg width="8" height="6" viewBox="0 0 8 6" fill="none"><path d="M1 5l3-3 3 3" stroke="#fff" strokeWidth="1.3" /></svg>
            </GeoHeader>
            <GeoBody>
              {GEO_ROWS.map((row, i) => (
                <GeoRow key={i} $last={i === GEO_ROWS.length - 1}>
                  {row.map(n => <GeoTool key={n} $on={n === 'arcB'}><Icon n={n} s={15} /></GeoTool>)}
                </GeoRow>
              ))}
            </GeoBody>
            {SECTIONS_BELOW.map(([label, icon]) => (
              <Pill key={label}>
                <Icon n={icon} s={14} />
                <PillLabel>{label}</PillLabel>
                {label === 'Survey' ? <Icon n="surveyR" s={11} /> : <Chevrons />}
              </Pill>
            ))}
          </TaskPane>
        </Dock>
        <ViewWindow>
          <ViewTitle>
            <Icon n="viewDoc" s={12} />
            <ViewName>View 1, Default</ViewName>
            <WinButtons $pad={2}>
              <WinButton>_</WinButton>
              <WinButton>❐</WinButton>
              <WinButton>×</WinButton>
            </WinButtons>
          </ViewTitle>
          <ViewTools>
            <Slot $w={15}><Icon n="grid" s={12} /></Slot>
            <Caret $w={12} />
            <Slot $w={16}><Icon n="brain" s={13} /></Slot>
            <Slot $w={13}><Icon n="sun" s={13} /></Slot>
            <Caret $w={11} />
            <Sep $h={14} $m={2} />
            <Slot $w={15}><Icon n="marker" s={13} /></Slot>
            <Slot $w={14}><Icon n="zoomin" s={13} /></Slot>
            <Slot $w={15}><Icon n="zoomout" s={13} /></Slot>
            <Slot $w={15}><Icon n="fit" s={13} /></Slot>
            <Slot $w={15}><Icon n="grid" s={13} /></Slot>
            <Slot $w={15}><Icon n="rotate" s={13} /></Slot>
            <Slot $w={15}><Icon n="hand" s={13} /></Slot>
            <Sep $h={14} $m={1} />
            <Slot $w={15}><Icon n="view" s={12} /></Slot>
            <ToggleTool $w={15} $on><Icon n="view" s={12} /></ToggleTool>
            <Slot $w={17}><Icon n="tiles" s={13} /></Slot>
            <Slot $w={15}><Icon n="zoomin" s={13} /></Slot>
            <Slot $w={16}><Icon n="copy" s={13} /></Slot>
          </ViewTools>
          <ViewBody>
            <Canvas>
              <CadDrawing />
              <Heading $x={86} $y={-7}>Line Between Points</Heading>
              <Heading $x={350} $y={-7}>Simple Line <span>To Element</span></Heading>
              <Heading $x={627} $y={-7}>Simple Line <span>From Element</span></Heading>
              <Heading $x={939} $y={-7}>Line Between Arcs</Heading>
              <Hint $y={141}>{HINT}</Hint>
              <BigTitle $x={680} $y={174} $size={46} $sp={3.5}>Arc</BigTitle>
              <Heading $x={86} $y={263}>Circle</Heading>
              <Heading $x={350} $y={263}>Arc Between Points</Heading>
              <Heading $x={627} $y={263}>Simple Arc  <span>To Element</span></Heading>
              <Heading $x={939} $y={263}>Arc  <span>From Element</span></Heading>
              <Hint $y={410}>{HINT}</Hint>
              <BigTitle $x={411} $y={435} $size={48} $sp={2.5}>Geometry Spiral</BigTitle>
              <ToggleBar />
              <ArcDialog />
              <Prompt>
                <PromptTitle>Enter Placement Method</PromptTitle>
                <PromptRow>
                  <PromptLabel>Placement Method</PromptLabel>
                  <PromptValue>Center\Radius</PromptValue>
                  <PromptDrop />
                </PromptRow>
              </Prompt>
            </Canvas>
            <VScroll>
              <ScrollBtn $dir="up" />
              <VThumb />
              <Spacer />
              <ScrollBtn $dir="down" />
            </VScroll>
          </ViewBody>
          <HScroll>
            <ScrollBtn $dir="left" />
            <HThumb />
            <Spacer />
            <ScrollBtn $dir="right" />
            <ScrollCorner />
          </HScroll>
        </ViewWindow>
        <RightTools>
          {RIGHT_TOOLS.map(n => <RightTool key={n} $h={RIGHT_HEIGHTS[n]}><Icon n={n} s={RIGHT_HEIGHTS[n] || 15} /></RightTool>)}
          <RightSep />
          {RIGHT_TOOLS_2.map(n => <RightTool key={n}><Icon n={n} s={15} /></RightTool>)}
        </RightTools>
      </Middle>

      <MessageBar>Civil Message Center<MessageMark /></MessageBar>

      <FilterBar>
        <Slot $w={20}><Icon n="scale" s={14} /></Slot>
        <Slot $w={20}><Icon n="scalesun" s={14} /></Slot>
        <Slot $w={2} />
        <Combo $w={101} $h={15}><div /><DropButton /></Combo>
        <Sep $m={2} $h={22} />
        <Combo $w={102} $h={15}><div /><DropButton /></Combo>
      </FilterBar>

      <ViewBar>
        <Slot $w={18}><Icon n="back" s={13} /></Slot>
        <Caret $w={12} />
        <Slot $w={18}><Icon n="forward" s={13} /></Slot>
        <Caret $w={12} />
        <Slot $w={18}><Icon n="pen" s={14} /></Slot>
        <Caret $w={13} />
        <Combo $w={111} $navy $h={15} $pad={3}><Icon n="monitors" s={11} />&nbsp;Multi-Model Views<Spacer /><DropButton /></Combo>
        <Sep $m={1} $h={19} />
        <Slot $w={19}><Icon n="monitors" s={15} /></Slot>
        <Sep $m={1} $h={19} />
        {[1, 2, 3, 4, 5, 6, 7, 8].map(k => <NumKey key={k} $on={k === 1}>{k}</NumKey>)}
        <Sep $m={3} $h={19} />
        <Slot $w={20}><Icon n="snapStar" s={16} /></Slot>
        <Slot $w={18}><Icon n="check" s={15} /></Slot>
        <Slot $w={5} />
        <ToggleTool $w={19} $on><Icon n="snapAxes" s={15} /></ToggleTool>
        <Slot $w={18}><Icon n="plus" s={14} /></Slot>
        {VIEW_SNAPS.map(([n, w]) => <Slot key={n} $w={w}><Icon n={n} s={15} /></Slot>)}
        <Sep $m={2} $h={19} />
        <ToggleTool $w={19} $on><Icon n="snapX" s={15} /></ToggleTool>
        <Sep $m={1} $h={19} />
        <Slot $w={19}><Icon n="smallLine" s={14} /></Slot>
        <ToggleTool $w={18}><Icon n="hatch" s={15} /></ToggleTool>
        {SNAP_MODES.map((n, i) => <Slot key={i} $w={18.7}><Icon n={n} s={14} /></Slot>)}
      </ViewBar>

      <StatusBar>
        <StatusPrompt>&gt; Enter Placement Method</StatusPrompt>
        <StatusCell $w={24} $m={2} />
        <Spacer />
        <StatusCell $w={24}><Icon n="snapPath" s={15} /></StatusCell>
        <StatusCell $w={23}><Icon n="lockSmall" s={12} /></StatusCell>
        <StatusCell $w={88} />
        <StatusCell $w={145} $pad={1} $big>-1115.0209, -1789.3917</StatusCell>
        <StatusCell $w={22}><Icon n="saveSmall" s={12} /></StatusCell>
        <StatusCell $w={22} $m={1}><Icon n="nosign" s={14} /></StatusCell>
      </StatusBar>

      <TaskBar>
        <StartButton><Icon n="winflag" s={14} />Start</StartButton>
        <TaskApp $flat $m={5}><Icon n="ie" s={15} /></TaskApp>
        <TaskApp $m={1}><Icon n="explorer" s={15} /></TaskApp>
        <TaskApp $flat $m={1}><Icon n="media" s={14} /></TaskApp>
        <TaskApp $flat $m={2}><Icon n="tool" s={15} /></TaskApp>
        <TaskApp $m={2}><Icon n="flag" s={15} /></TaskApp>
        <TaskApp $on $m={1}><Icon n="thumb" s={15} /></TaskApp>
        <TaskApp $m={1}><Icon n="camera" s={15} /></TaskApp>
        <Tray>
          <TrayIcon $w={11}><Icon n="upTray" s={9} /></TrayIcon>
          <TrayIcon $w={22}><Icon n="trayFlag" s={14} /></TrayIcon>
          <TrayIcon><Icon n="trayDoc" s={13} /></TrayIcon>
          <TrayIcon><Icon n="trayNet" s={14} /></TrayIcon>
          <TrayIcon $w={13}><Icon n="traySnd" s={13} /></TrayIcon>
          <Clock>12:48 PM</Clock>
          <TrayIcon $w={14}><Icon n="trayNote" s={12} /></TrayIcon>
        </Tray>
      </TaskBar>
    </Page>
  );
}
